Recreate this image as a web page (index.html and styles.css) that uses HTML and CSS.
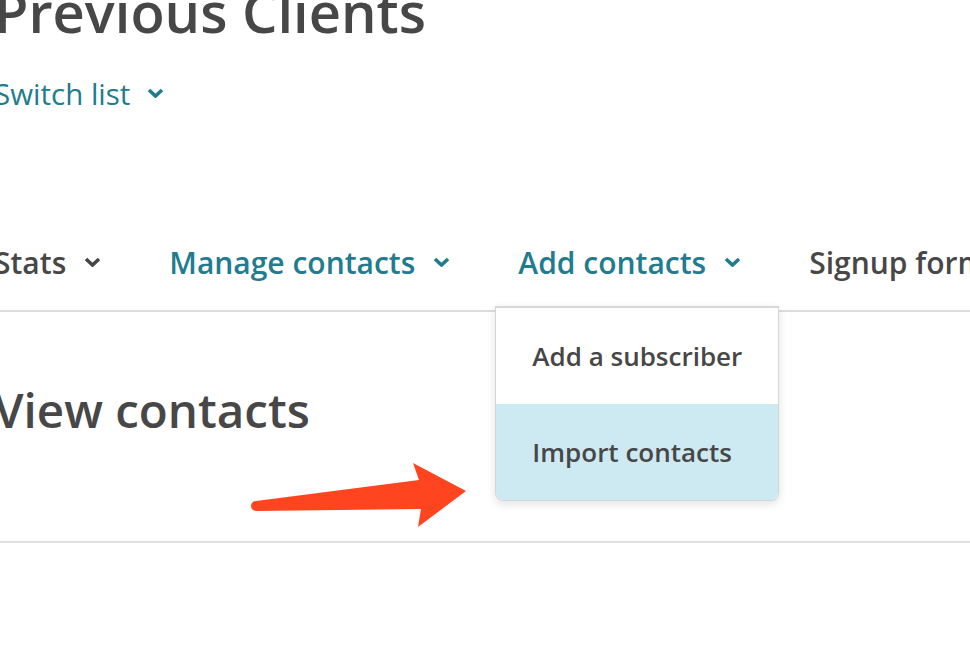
FILE: index.html
```html
<!DOCTYPE html>
<html>

<head>
    <meta charset="utf-8" />
    <title>Previous Clients</title>
    <link rel="stylesheet" href="styles.css">
</head>

<body>
    <div id="page">
        <header class="list-header">
            <h1 class="list-title">Previous Clients</h1>
            <a class="switch-list" href="#">Switch list
                <svg class="chevron" viewBox="0 0 17 10"><path d="M2 2 L8.5 8 L15 2" /></svg>
            </a>
        </header>

        <nav class="tabs">
            <div class="tab">Stats
                <svg class="chevron" viewBox="0 0 17 10"><path d="M2 2 L8.5 8 L15 2" /></svg>
            </div>
            <div class="tab teal">Manage contacts
                <svg class="chevron" viewBox="0 0 17 10"><path d="M2 2 L8.5 8 L15 2" /></svg>
            </div>
            <div class="tab teal open">Add contacts
                <svg class="chevron" viewBox="0 0 17 10"><path d="M2 2 L8.5 8 L15 2" /></svg>
                <ul class="dropdown">
                    <li>Add a subscriber</li>
                    <li class="hover">Import contacts</li>
                </ul>
            </div>
            <div class="tab">Signup forms
                <svg class="chevron" viewBox="0 0 17 10"><path d="M2 2 L8.5 8 L15 2" /></svg>
            </div>
        </nav>

        <section class="view">
            <h2>View contacts</h2>
        </section>

        <svg class="pointer" viewBox="0 0 230 80" width="230" height="80">
            <path d="M6 48 L169 27 L163 10 L216 38 L168 74 L171 56 L6 58 A5 5 0 0 1 6 48 Z" />
        </svg>
    </div>
</body>

</html>
```

FILE: styles.css
```css
html {
    margin: 0px;
    padding: 0px;
}

body {
    font-family: 'Open Sans', 'Liberation Sans', sans-serif;
    margin: 0px;
    padding: 0px;
    color: #474747;
    background-color: #ffffff;
    overflow: hidden;
}

#page {
    position: relative;
    margin-left: -6px;
    width: 1100px;
}

.list-title {
    font-size: 56px;
    font-weight: 600;
    line-height: 1;
    margin: -17px 0px 0px 0px;
    white-space: nowrap;
}

.switch-list {
    display: inline-flex;
    align-items: center;
    gap: 17px;
    margin-top: 40px;
    font-size: 29.5px;
    line-height: 1;
    color: #217c8f;
    text-decoration: none;
}

.switch-list .chevron {
    margin-top: -2px;
}

.chevron {
    width: 17px;
    height: 10px;
    flex: none;
}

.chevron path {
    fill: none;
    stroke: currentColor;
    stroke-width: 3.6;
    stroke-linecap: butt;
    stroke-linejoin: miter;
}

.tabs {
    display: flex;
    gap: 68px;
    margin-top: 138px;
    border-bottom: 2px solid #dddddd;
}

.tab {
    position: relative;
    display: flex;
    align-items: center;
    gap: 18px;
    padding-bottom: 32px;
    font-size: 30px;
    font-weight: 600;
    line-height: 1;
    white-space: nowrap;
}

.tab .chevron {
    margin-top: -2px;
}

.teal {
    color: #217c8f;
}

.dropdown {
    position: absolute;
    top: 58px;
    left: -23px;
    width: 282px;
    margin: 0px;
    padding: 0px;
    list-style: none;
    background-color: #ffffff;
    border: 1px solid #d6d6d6;
    border-top-width: 2px;
    border-radius: 0px 0px 8px 8px;
    box-shadow: 0px 3px 10px rgba(0, 0, 0, 0.12);
    overflow: hidden;
    z-index: 2;
}

.dropdown li {
    height: 96px;
    padding: 0px 36px;
    display: flex;
    align-items: center;
    font-size: 26px;
    font-weight: 600;
    color: #474747;
}

.dropdown li.hover {
    background-color: #cdeaf2;
}

.view {
    padding-top: 74px;
    padding-bottom: 107px;
    border-bottom: 2px solid #e0e0e0;
}

.view h2 {
    font-size: 47.5px;
    font-weight: 600;
    line-height: 1;
    margin: 0px;
}

.pointer {
    position: absolute;
    left: 256px;
    top: 470px;
    z-index: 3;
}

.pointer path {
    fill: #ff4420;
}
```
